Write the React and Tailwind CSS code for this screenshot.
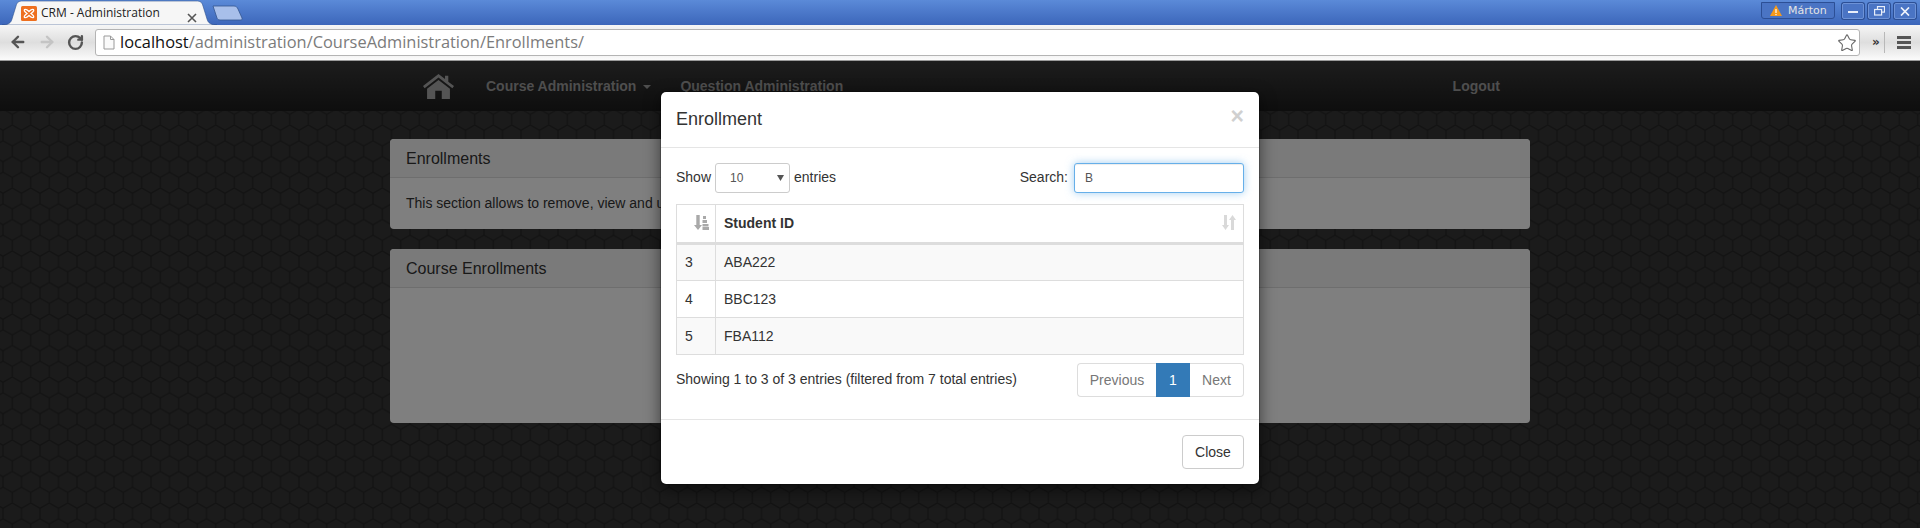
import React from "react";
import { ArrowLeft, ArrowRight, RotateCw, Star } from "lucide-react";

const sans = "font-['Liberation_Sans',Arial,sans-serif]";

function TabShape() {
  return (
    <svg className="absolute left-0 top-0" width="216" height="25" viewBox="0 0 216 25">
      <path d="M0 25 C6 25 9 23 10 19 L14 6 C15 2 17 1 21 1 L194 1 C198 1 200 2 201 6 L205 19 C206 23 209 25 215 25 Z" fill="#f6f6f6" stroke="#2f538f" strokeWidth="0.6" />
    </svg>
  );
}

function NewTab() {
  return (
    <svg width="32" height="16" viewBox="0 0 32 16" className="ml-[-4px] mt-[5px]">
      <path d="M1 1 L22 1 C24 1 25 2 26 4 L30 13 C30.500 14.500 30 15 28 15 L8 15 C6 15 5.500 14 5 13 Z" fill="#a8bfea" stroke="#33558f" strokeWidth="0.8" />
    </svg>
  );
}

function Favicon() {
  return (
    <svg width="16" height="15" viewBox="0 0 16 15" className="ml-[19px] shrink-0">
      <rect width="16" height="15" rx="1.5" fill="#ee6f1e" />
      <path d="M3.500 3.500 C5 2.800 6 3.500 8 5.500 C10 3.500 11 2.800 12.500 3.500 C13.500 5 12 6 10 7.500 C12 9 13.500 10 12.500 11.500 C11 12.200 10 11.500 8 9.500 C6 11.500 5 12.200 3.500 11.500 C2.500 10 4 9 6 7.500 C4 6 2.500 5 3.500 3.500 Z" fill="none" stroke="#fff" strokeWidth="1.300" />
    </svg>
  );
}

function WinButton({ children }) {
  return (
    <div className="flex h-[16px] w-[22px] items-center justify-center rounded-[2px] border border-[#6d92d6] bg-[#4a74c4] shadow-[0_0_0_1px_#2c4f95]">
      {children}
    </div>
  );
}

function TabStrip() {
  return (
    <div className="flex h-[25px] items-start bg-gradient-to-b from-[#5b8ad8] to-[#3c66ba]">
      <div className="relative ml-[2px] flex h-[25px] w-[214px] shrink-0 items-center">
        <TabShape />
        <div className="relative flex w-full items-center pt-[1px]">
          <Favicon />
          <span className="ml-[4px] font-['Open_Sans',sans-serif] text-[12px] leading-none text-[#222]">CRM - Administration</span>
          <svg width="10" height="10" viewBox="0 0 10 10" className="absolute left-[185px] top-[8px]">
            <path d="M1 1 L9 9 M9 1 L1 9" stroke="#555" strokeWidth="1.6" />
          </svg>
        </div>
      </div>
      <NewTab />
      <div className="ml-auto mr-[4px] mt-[3px] flex items-start gap-[4px]">
        <div className="mr-[3px] mt-[-1px] flex h-[17px] w-[74px] items-center gap-[6px] rounded-b-[3px] border border-[#2c4f95] bg-[#4a74c4] pl-[8px]">
          <svg width="12" height="11" viewBox="0 0 12 11">
            <path d="M6 0 L12 11 L0 11 Z" fill="#f59a1c" />
            <rect x="5.400" y="4" width="1.200" height="4" fill="#fff" />
            <rect x="5.400" y="9" width="1.200" height="1.200" fill="#fff" />
          </svg>
          <span className="font-['DejaVu_Sans',sans-serif] text-[11px] leading-none text-[#e4e4e4]">Márton</span>
        </div>
        <WinButton>
          <svg width="10" height="8" viewBox="0 0 10 8"><rect x="0" y="4" width="10" height="2" fill="#e8eef9" /></svg>
        </WinButton>
        <WinButton>
          <svg width="11" height="10" viewBox="0 0 11 10" fill="none" stroke="#e8eef9" strokeWidth="1.200"><rect x="3.500" y="0.600" width="7" height="5.500" /><rect x="0.600" y="3.500" width="7" height="5.500" fill="#4a74c4" /></svg>
        </WinButton>
        <WinButton>
          <svg width="10" height="9" viewBox="0 0 10 9"><path d="M1 0.500 L9 8.500 M9 0.500 L1 8.500" stroke="#f0f4fb" strokeWidth="1.700" /></svg>
        </WinButton>
      </div>
    </div>
  );
}

function Toolbar() {
  return (
    <div className="flex h-[36px] items-start border-b border-[#9b9b9b] bg-gradient-to-b from-[#f6f6f6] via-[#dedede] to-[#fbfbfb]">
      <div className="flex h-[31px] w-[95px] shrink-0 items-center pl-[9px] pt-[3px]">
        <ArrowLeft size={18} strokeWidth={3.200} color="#555" />
        <ArrowRight size={18} strokeWidth={3.200} color="#c4c4c4" className="ml-[11px]" />
        <RotateCw size={17} strokeWidth={3.400} color="#555" className="ml-[11px]" />
      </div>
      <div className="mt-[4px] flex h-[27px] min-w-0 flex-1 items-center rounded-[3px] border border-[#b4b4b4] bg-white">
        <svg width="12" height="15" viewBox="0 0 12 15" className="ml-[7px] shrink-0" fill="#fafafa" stroke="#9a9a9a">
          <path d="M1 1 H7.500 L11 4.500 V14 H1 Z M7.500 1 V4.500 H11" />
        </svg>
        <span className="ml-[5px] font-['Open_Sans',sans-serif] text-[16.400px] leading-none text-[#7b7b7b]">
          <span className="text-[#111]">localhost</span>/administration/CourseAdministration/Enrollments/
        </span>
        <Star size={20} strokeWidth={1.300} color="#666" className="ml-auto mr-[2px]" />
      </div>
      <div className="flex h-[31px] w-[60px] shrink-0 items-center pt-[3px]">
        <span className="ml-[12px] w-[11px] font-['DejaVu_Sans',sans-serif] text-[12px] font-bold leading-none text-[#333]">»</span>
        <div className="ml-[1px] h-[21px] w-px bg-[#b8b8b8]" />
        <div className="ml-[12px] flex flex-col gap-[2px]">
          <div className="h-[3px] w-[14px] bg-[#555]" />
          <div className="h-[3px] w-[14px] bg-[#555]" />
          <div className="h-[3px] w-[14px] bg-[#555]" />
        </div>
      </div>
    </div>
  );
}

function HexBackground() {
  return (
    <svg className="absolute inset-0 h-full w-full" aria-hidden="true">
      <defs>
        <pattern id="hex" width="18.500" height="31.500" patternUnits="userSpaceOnUse" x="3" y="1">
          <rect width="18.500" height="31.500" fill="#373737" />
          <path
            d="M0 5.250 L9.250 0 L18.500 5.250 M0 5.250 V15.750 L9.250 21 L18.500 15.750 V5.250 M9.250 21 V31.500"
            fill="none"
            stroke="#262626"
            strokeWidth="1.300"
          />
        </pattern>
      </defs>
      <rect width="100%" height="100%" fill="url(#hex)" />
    </svg>
  );
}

function HomeIcon() {
  return (
    <svg width="31" height="26" viewBox="0 0 38 28" preserveAspectRatio="none">
      <path d="M0 14 L19 1 L27 6.500 V3 H31 V9.300 L38 14 L36 16.500 L19 4.800 L2 16.500 Z" fill="#a9a9a9" />
      <path d="M5 17 L19 7.500 L33 17 V28 H23 V19 H15 V28 H5 Z" fill="#a9a9a9" />
    </svg>
  );
}

function Navbar() {
  return (
    <div className="relative h-[50px] bg-gradient-to-b from-[#3a3a3a] to-[#1c1c1c]">
      <div className={`mx-auto flex h-full w-[1170px] items-center text-[14px] font-bold text-[#9d9d9d] ${sans}`}>
        <div className="ml-[48px]">
          <HomeIcon />
        </div>
        <span className="ml-[32px]">Course Administration</span>
        <span className="ml-[7px] mt-[2px] h-0 w-0 border-x-[4px] border-t-[4px] border-x-transparent border-t-[#9d9d9d]" />
        <span className="ml-[29px]">Question Administration</span>
        <span className="ml-auto mr-[45px]">Logout</span>
      </div>
    </div>
  );
}

function Panel({ title, bodyClass, children }) {
  return (
    <div className="overflow-hidden rounded-[4px] bg-white">
      <div className="flex h-[39px] items-center border-b border-[#ddd] bg-[#f5f5f5] px-[16px] pt-[1px] text-[16px] text-[#333]">{title}</div>
      <div className={`px-[16px] pt-[15px] text-[14px] leading-[20px] text-[#333] ${bodyClass}`}>{children}</div>
    </div>
  );
}

function SortAttrIcon() {
  return (
    <svg width="15" height="15" viewBox="0 0 15 15" fill="#a9a9a9">
      <path d="M2.300 0 H5.700 V10 H8 L4 15 L0 10 H2.300 Z" />
      <rect x="9" y="1" width="3" height="3" />
      <rect x="8.500" y="5" width="4.500" height="3" />
      <rect x="8.500" y="9" width="6" height="2.500" />
      <rect x="8.500" y="12" width="6.500" height="3" />
    </svg>
  );
}

function SortIcon() {
  return (
    <svg width="14" height="15" viewBox="0 0 14 15" fill="#d9d9d9">
      <path d="M2 0 H5 V10 H7 L3.500 15 L0 10 H2 Z" />
      <path d="M9 15 H12 V5 H14 L10.500 0 L7 5 H9 Z" />
    </svg>
  );
}

function Modal() {
  const rows = [
    ["3", "ABA222", "bg-[#f9f9f9]", "pb-[2px]"],
    ["4", "BBC123", "bg-white", ""],
    ["5", "FBA112", "bg-[#f9f9f9]", ""],
  ];
  return (
    <div className={`absolute left-[660px] top-[30px] w-[600px] rounded-[6px] border border-black/20 bg-white bg-clip-padding text-[14px] leading-[20px] text-[#333] shadow-[0_5px_15px_rgba(0,0,0,0.5)] ${sans}`}>
      <div className="relative flex h-[56px] items-center border-b border-[#e5e5e5] px-[15px]">
        <h4 className="mt-[-2px] text-[18px] leading-[20px] text-[#333]">Enrollment</h4>
        <span className="absolute right-[15px] top-[12px] text-[23px] font-bold leading-[24px] text-[#d0d0d0]">×</span>
      </div>
      <div className="px-[15px] pt-[15px]">
        <div className="flex h-[30px] items-center">
          <span className="mt-[-2px]">Show</span>
          <div className="ml-[4px] flex h-[30px] w-[75px] items-center rounded-[3px] border border-[#ccc] bg-white pl-[14px] pr-[5px] text-[12px] text-[#555]">
            <span>10</span>
            <svg width="7" height="6" viewBox="0 0 7 6" className="ml-auto">
              <path d="M0 0 H7 L3.500 6 Z" fill="#555" />
            </svg>
          </div>
          <span className="ml-[4px] mt-[-2px]">entries</span>
          <span className="ml-auto mt-[-2px]">Search:</span>
          <input
            readOnly
            value="B"
            className="ml-[6px] h-[30px] w-[170px] rounded-[3px] border border-[#66afe9] bg-white px-[10px] text-[12px] text-[#555] shadow-[inset_0_1px_1px_rgba(0,0,0,0.075),0_0_8px_rgba(102,175,233,0.6)] outline-none"
          />
        </div>
        <table className="mt-[11px] w-[568px] table-fixed border-collapse">
          <thead>
            <tr>
              <th className="h-[39px] w-[39px] border border-b-[3px] border-[#ddd] p-0 pb-[2px]">
                <div className="flex justify-end pr-[6px]"><SortAttrIcon /></div>
              </th>
              <th className="h-[39px] border border-b-[3px] border-[#ddd] p-0 pb-[2px] pl-[8px] pr-[7px] text-left font-bold">
                <div className="flex items-center justify-between">
                  <span>Student ID</span>
                  <SortIcon />
                </div>
              </th>
            </tr>
          </thead>
          <tbody>
            {rows.map(([n, id, bg, pad]) => (
              <tr key={n} className={bg}>
                <td className={`h-[37px] border border-[#ddd] p-0 pl-[8px] ${pad}`}>{n}</td>
                <td className={`h-[37px] border border-[#ddd] p-0 pl-[8px] ${pad}`}>{id}</td>
              </tr>
            ))}
          </tbody>
        </table>
        <div className="mt-[8px] flex items-start justify-between">
          <span className="mt-[6px]">Showing 1 to 3 of 3 entries (filtered from 7 total entries)</span>
          <div className="flex h-[34px]">
            <span className="flex w-[79px] items-center justify-center rounded-l-[4px] border border-r-0 border-[#ddd] text-[#777]">Previous</span>
            <span className="flex w-[34px] items-center justify-center bg-[#337ab7] text-white">1</span>
            <span className="flex w-[54px] items-center justify-center rounded-r-[4px] border border-l-0 border-[#ddd] text-[#777]">Next</span>
          </div>
        </div>
      </div>
      <div className="mt-[22px] flex justify-end border-t border-[#e5e5e5] p-[15px]">
        <button className="h-[34px] w-[62px] rounded-[4px] border border-[#ccc] bg-white text-[#333]">Close</button>
      </div>
    </div>
  );
}

export default function App() {
  return (
    <div className="flex h-[528px] w-[1920px] flex-col overflow-hidden bg-[#373737]">
      <TabStrip />
      <Toolbar />
      <div className={`relative flex-1 ${sans}`}>
        <HexBackground />
        <Navbar />
        <div className="relative mx-auto mt-[28px] flex w-[1140px] flex-col gap-[20px]">
          <Panel title="Enrollments" bodyClass="h-[51px]">This section allows to remove, view and update enrollments.</Panel>
          <Panel title="Course Enrollments" bodyClass="h-[135px]" />
        </div>
        <div className="absolute inset-0 bg-black/50" />
        <Modal />
      </div>
    </div>
  );
}
